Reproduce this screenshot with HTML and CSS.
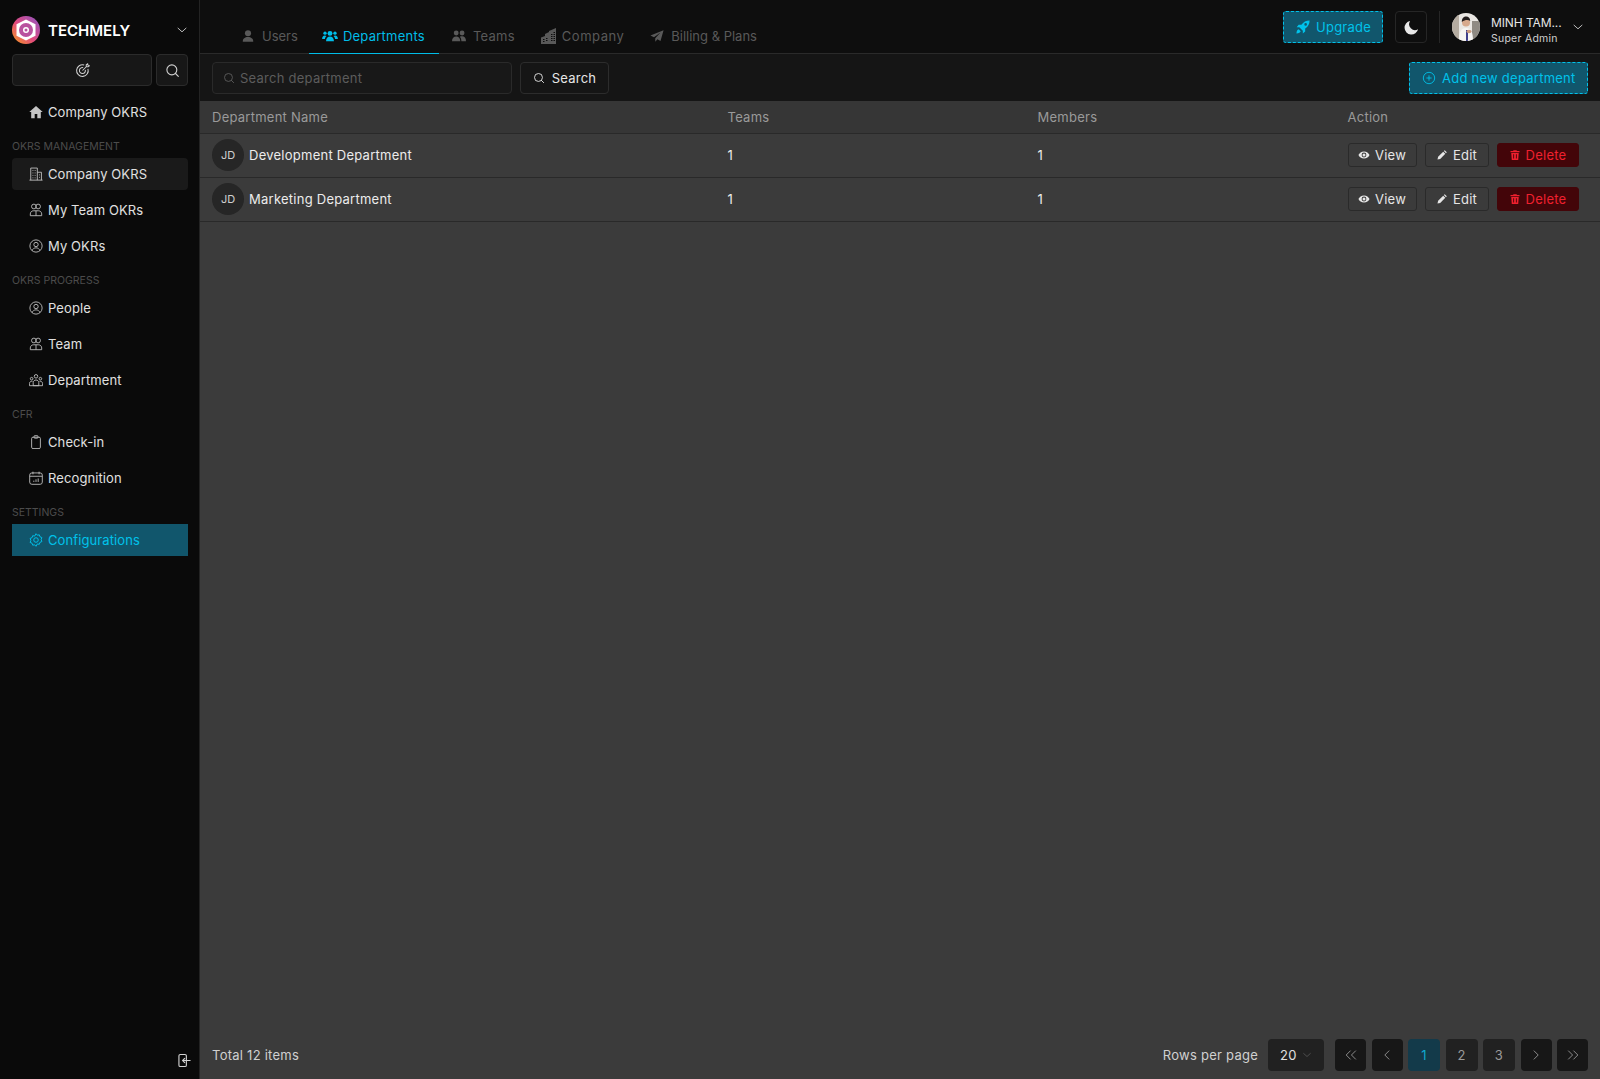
FILE: index.html
```html
<!DOCTYPE html>
<html lang="en">
<head>
<meta charset="utf-8">
<title>Departments</title>
<link rel="stylesheet" href="styles.css">
</head>
<body>
<svg class="defs" width="0" height="0" aria-hidden="true">
  <defs>
    <symbol id="i-search" viewBox="0 0 16 16"><circle cx="7.3" cy="7.3" r="5.3" fill="none" stroke="currentColor" stroke-width="1.2"/><path d="M11.2 11.2l3 3" fill="none" stroke="currentColor" stroke-width="1.2" stroke-linecap="round"/></symbol>
    <symbol id="i-chev" viewBox="0 0 12 12"><path d="M2 4.200l4 3.600 4-3.600" fill="none" stroke="currentColor" stroke-width="1" stroke-linecap="round" stroke-linejoin="round"/></symbol>
    <symbol id="i-team" viewBox="0 0 16 16"><g fill="none" stroke="currentColor" stroke-width="1"><circle cx="5.600" cy="4" r="2.700"/><circle cx="10.400" cy="4" r="2.700"/><path d="M1.500 14.500v-2c0-2 1.600-3.600 3.600-3.600h5.800c2 0 3.600 1.600 3.600 3.600v2z"/><path d="M8 9v5.500"/></g></symbol>
    <symbol id="i-user" viewBox="0 0 16 16"><g fill="none" stroke="currentColor" stroke-width="1"><circle cx="8" cy="8" r="7"/><circle cx="8" cy="6.300" r="2.500"/><path d="M3.600 13.300c.6-2.100 2.300-3.200 4.400-3.200s3.800 1.100 4.400 3.200"/></g></symbol>
    <symbol id="i-solid-user" viewBox="0 0 16 16"><circle cx="8" cy="4.800" r="3.500" fill="currentColor"/><path d="M2 14.500c0-3.500 2.500-5.300 6-5.300s6 1.800 6 5.300z" fill="currentColor"/></symbol>
    <symbol id="i-pages-l" viewBox="0 0 16 16"><path d="M7.500 3l-5 5 5 5M13.500 3l-5 5 5 5" fill="none" stroke="currentColor" stroke-width="1"/></symbol>
    <symbol id="i-pages-r" viewBox="0 0 16 16"><path d="M2.500 3l5 5-5 5M8.500 3l5 5-5 5" fill="none" stroke="currentColor" stroke-width="1"/></symbol>
    <symbol id="i-page-l" viewBox="0 0 16 16"><path d="M10.500 3l-5 5 5 5" fill="none" stroke="currentColor" stroke-width="1"/></symbol>
    <symbol id="i-page-r" viewBox="0 0 16 16"><path d="M5.500 3l5 5-5 5" fill="none" stroke="currentColor" stroke-width="1"/></symbol>
    <symbol id="i-eye" viewBox="0 0 16 16"><path d="M8 3.200C4.500 3.200 1.800 5.400.6 8c1.200 2.600 3.900 4.800 7.400 4.800s6.200-2.200 7.400-4.800C14.200 5.400 11.500 3.200 8 3.200zm0 8A3.200 3.200 0 1 1 8 4.800a3.200 3.200 0 0 1 0 6.400zM8 6a2 2 0 1 0 0 4 2 2 0 0 0 0-4z" fill="currentColor"/></symbol>
    <symbol id="i-pen" viewBox="0 0 16 16"><path d="M2 14l.8-3.600 6.800-6.800 2.800 2.800-6.800 6.800zM10.500 2.700l1.100-1.100 2.800 2.800-1.100 1.100z" fill="currentColor"/></symbol>
    <symbol id="i-trash" viewBox="0 0 16 16"><path d="M6 1.500h4l.6 1.200H14v1.600H2V2.700h3.400zM3 5.300h10l-.7 9.200H3.700zm2.600 1.700v5.800h1.200V7zm3.600 0v5.800h1.200V7z" fill="currentColor" fill-rule="evenodd"/></symbol>
  </defs>
</svg>

<aside class="sidebar">
  <div class="brand">
    <svg class="logo" viewBox="0 0 28 28">
      <defs><linearGradient id="lg" x1="0" y1="1" x2="1" y2="0"><stop offset="0" stop-color="#f9a11b"/><stop offset=".45" stop-color="#e2497e"/><stop offset="1" stop-color="#8b56c6"/></linearGradient></defs>
      <circle cx="14" cy="14" r="14" fill="url(#lg)"/>
      <path d="M14 3.500l9.500 4.800v11.400L14 24.500l-9.500-4.800V8.300z" fill="#fff"/>
      <circle cx="14" cy="14" r="7" fill="#b9529f"/>
      <circle cx="14" cy="14" r="3" fill="#fff"/>
      <circle cx="14" cy="14" r="1.500" fill="#b9529f"/>
    </svg>
    <span class="brand-name">TECHMELY</span>
    <svg class="brand-chev"><use href="#i-chev"/></svg>
  </div>
  <div class="side-tools">
    <button class="tool tool-wide" type="button">
      <svg class="tool-icon" viewBox="0 0 16 16"><g fill="none" stroke="currentColor" stroke-width="1.100"><path d="M13.800 6.200a6.200 6.200 0 1 1-4-4"/><path d="M11 7.300a3.200 3.200 0 1 1-2.300-2.300"/><path d="M8 8l4-4M12 4V2l1.500-1 .4 1.600 1.600.4-1.500 1z"/></g></svg>
    </button>
    <button class="tool tool-square" type="button"><svg class="tool-icon"><use href="#i-search"/></svg></button>
  </div>
  <nav class="side-nav">
    <a class="nav-item">
      <svg class="nav-icon" viewBox="0 0 16 16"><path d="M8 1L.3 8h2.200v7h4v-4.800h3V15h4V8h2.200z" fill="currentColor"/></svg>
      <span>Company OKRS</span>
    </a>
    <div class="nav-label">OKRS MANAGEMENT</div>
    <a class="nav-item is-current">
      <svg class="nav-icon" viewBox="0 0 16 16"><g fill="none" stroke="currentColor" stroke-width="1"><path d="M2 15V1.200h7.500V15M9.500 6h4.700v9M.5 15h15"/><path d="M4 4h1M6.500 4h1M4 6.800h1M6.500 6.800h1M4 9.600h1M6.500 9.600h1M4 12.400h1M6.500 12.400h1M11.500 9h1M11.500 11.800h1"/></g></svg>
      <span>Company OKRS</span>
    </a>
    <a class="nav-item"><svg class="nav-icon"><use href="#i-team"/></svg><span>My Team OKRs</span></a>
    <a class="nav-item"><svg class="nav-icon"><use href="#i-user"/></svg><span>My OKRs</span></a>
    <div class="nav-label">OKRS PROGRESS</div>
    <a class="nav-item"><svg class="nav-icon"><use href="#i-user"/></svg><span>People</span></a>
    <a class="nav-item"><svg class="nav-icon"><use href="#i-team"/></svg><span>Team</span></a>
    <a class="nav-item">
      <svg class="nav-icon" viewBox="0 0 16 16"><g fill="none" stroke="currentColor" stroke-width="1"><circle cx="8" cy="3.800" r="2"/><circle cx="3" cy="6.500" r="1.500"/><circle cx="13" cy="6.500" r="1.500"/><path d="M4.800 14.500v-3.500c0-1.500 1.300-3 3.200-3s3.200 1.500 3.200 3v3.500z"/><path d="M.5 14.500v-2.500c0-1.500 1.200-2.500 2.500-2.500h1M15.500 14.500v-2.500c0-1.500-1.200-2.500-2.500-2.500h-1M.5 14.500h15"/></g></svg>
      <span>Department</span>
    </a>
    <div class="nav-label">CFR</div>
    <a class="nav-item">
      <svg class="nav-icon" viewBox="0 0 16 16"><g fill="none" stroke="currentColor" stroke-width="1"><rect x="3" y="2.500" width="10" height="13" rx="1.500"/><rect x="5.800" y=".8" width="4.400" height="2.800" rx=".6"/></g></svg>
      <span>Check-in</span>
    </a>
    <a class="nav-item">
      <svg class="nav-icon" viewBox="0 0 16 16"><g fill="none" stroke="currentColor" stroke-width="1"><rect x=".8" y="2.200" width="14.400" height="13" rx="2.500"/><path d="M.8 6h14.400M4.500 .8v3M11.500 .8v3M5.500 12.500V11M8 12.500V9.500M10.500 12.500V8.500"/></g></svg>
      <span>Recognition</span>
    </a>
    <div class="nav-label">SETTINGS</div>
    <a class="nav-item is-active">
      <svg class="nav-icon" viewBox="0 0 16 16"><g fill="none" stroke="currentColor" stroke-width="1.100"><path d="M8 .8l1.500 1.700 2.300-.4.700 2.200 2.200.9-.8 2.300.8 2.300-2.200.9-.7 2.200-2.300-.4L8 15.200l-1.500-1.700-2.300.4-.7-2.200-2.200-.9.800-2.300-.8-2.300 2.200-.9.700-2.200 2.300.4z"/><circle cx="8" cy="8" r="2.600"/></g></svg>
      <span>Configurations</span>
    </a>
  </nav>
  <div class="side-foot">
    <svg class="logout" viewBox="0 0 14 16"><g fill="none" stroke="currentColor" stroke-width="1.200"><rect x="1" y="1.500" width="8" height="13" rx="1.500"/><path d="M13.500 8H5M7.500 5.500L5 8l2.500 2.500" stroke-width="1.300"/></g></svg>
  </div>
</aside>

<main class="main">
  <header class="topbar">
    <div class="tabs">
      <a class="tab tab-users"><svg class="tab-icon"><use href="#i-solid-user"/></svg>Users</a>
      <a class="tab tab-on">
        <svg class="tab-icon tab-icon-w" viewBox="0 0 18 16"><g fill="currentColor"><circle cx="9" cy="5" r="2.800"/><circle cx="3.300" cy="4.800" r="1.900"/><circle cx="14.700" cy="4.800" r="1.900"/><path d="M4.500 14c0-3.300 1.800-5.300 4.500-5.300s4.500 2 4.500 5.300zM0 11.500c0-2.300 1.200-4 3.200-4 .8 0 1.300.2 1.800.6C3.800 9 3.300 10.300 3.200 11.500zM18 11.500c0-2.300-1.200-4-3.200-4-.8 0-1.300.2-1.800.6 1.200.9 1.700 2.200 1.800 3.400z"/></g></svg>
        Departments
      </a>
      <a class="tab">
        <svg class="tab-icon" viewBox="0 0 16 16"><g fill="currentColor"><circle cx="4.800" cy="4.500" r="2.800"/><circle cx="11.500" cy="4.500" r="2.800"/><path d="M0 14c0-3.500 2-5.500 4.800-5.500S9.500 10.500 9.500 14zM10.700 14c0-2.200-.5-4-1.700-5.200.7-.3 1.500-.4 2.500-.4 2.800 0 4.500 2 4.500 5.600z"/></g></svg>
        Teams
      </a>
      <a class="tab tab-company">
        <svg class="tab-icon tab-icon-tall" viewBox="0 0 16 16"><path d="M0 16V9.500l4-1.500V6l4-2V3l7-3v16zM2 11v1h1.500v-1zm0 2v1h1.500v-1zm3-3v1h1.500v-1zm0 2v1h1.500v-1zm5-6v1h1.500V6zm0 2v1h1.500V8zm0 2v1h1.500v-1zm0 2v1h1.500v-1zm2.500-8v1H14V4zm0 2v1H14V6zm0 2v1H14V8zm0 2v1H14v-1zm0 2v1H14v-1z" fill="currentColor" fill-rule="evenodd"/></svg>
        Company
      </a>
      <a class="tab tab-billing">
        <svg class="tab-icon" viewBox="0 0 16 16"><path d="M15.500 1.500L.5 7.500l4 2 7.500-5.500-6 6.500v4l2.500-2.700 3.500 2z" fill="currentColor"/></svg>
        Billing &amp; Plans
      </a>
    </div>
    <div class="top-right">
      <button class="dash-btn upgrade" type="button">
        <svg class="btn-icon-lg" viewBox="0 0 16 16"><path d="M15.500.5c-4 0-7 1.500-9.300 5H3L.8 8.300h3l4 4v3L10.500 13V9.700c3.500-2.300 5-5.300 5-9.200zM11 3.500a1.500 1.500 0 1 1 0 3 1.500 1.500 0 0 1 0-3zM3 10.500c-1.500.5-2.300 2-2.500 4.900 3-.2 4.400-1 4.900-2.500z" fill="currentColor" fill-rule="evenodd"/></svg>
        Upgrade
      </button>
      <button class="moon" type="button"><svg viewBox="0 0 16 16" class="moon-icon"><path d="M6.500 1a7.300 7.300 0 1 0 8.500 8.800A6.300 6.300 0 0 1 6.500 1z" fill="currentColor"/></svg></button>
      <div class="top-divider"></div>
      <div class="profile">
        <svg class="photo" viewBox="0 0 28 28">
          <defs><clipPath id="pc"><circle cx="14" cy="14" r="14"/></clipPath></defs>
          <g clip-path="url(#pc)">
            <rect width="28" height="28" fill="#e9e6e2"/>
            <rect x="0" y="0" width="7" height="28" fill="#b5aca1"/>
            <rect x="20" y="8" width="8" height="20" fill="#8f8a83"/>
            <path d="M7 28c0-9 2-13 7-13s7 4 7 13z" fill="#f7f5f3"/>
            <rect x="14" y="17" width="2" height="11" fill="#3f3f8a"/>
            <circle cx="14" cy="9.500" r="4" fill="#d7a98c"/>
            <path d="M9.800 9c0-4 2-5.500 4.400-5.500s4 1.500 4 4.500c-2-1.300-5-1.300-8.400 1z" fill="#221c1b"/>
            <ellipse cx="17" cy="18.500" rx="2.500" ry="1.700" fill="#c99a7e"/>
          </g>
        </svg>
        <div class="who">
          <div class="who-name">MINH TAM...</div>
          <div class="who-role">Super Admin</div>
        </div>
        <svg class="who-chev"><use href="#i-chev"/></svg>
      </div>
    </div>
  </header>

  <div class="toolbar">
    <label class="search-field">
      <svg class="search-icon"><use href="#i-search"/></svg>
      <span class="placeholder">Search department</span>
    </label>
    <button class="search-btn" type="button"><svg class="search-icon"><use href="#i-search"/></svg>Search</button>
    <button class="dash-btn add" type="button">
      <svg class="btn-icon-lg" viewBox="0 0 16 16"><g fill="none" stroke="currentColor" stroke-width="1"><circle cx="8" cy="8" r="6.500"/><path d="M8 5v6M5 8h6"/></g></svg>
      Add new department
    </button>
  </div>

  <table class="grid">
    <colgroup><col class="c1"><col class="c2"><col class="c3"><col class="c4"></colgroup>
    <thead>
      <tr><th>Department Name</th><th>Teams</th><th>Members</th><th>Action</th></tr>
    </thead>
    <tbody>
      <tr>
        <td><div class="dept"><span class="badge">JD</span>Development Department</div></td>
        <td>1</td><td>1</td>
        <td><div class="actions">
          <button class="act act-view" type="button"><svg class="act-icon"><use href="#i-eye"/></svg>View</button>
          <button class="act act-edit" type="button"><svg class="act-icon"><use href="#i-pen"/></svg>Edit</button>
          <button class="act act-del" type="button"><svg class="act-icon"><use href="#i-trash"/></svg>Delete</button>
        </div></td>
      </tr>
      <tr>
        <td><div class="dept"><span class="badge">JD</span>Marketing Department</div></td>
        <td>1</td><td>1</td>
        <td><div class="actions">
          <button class="act act-view" type="button"><svg class="act-icon"><use href="#i-eye"/></svg>View</button>
          <button class="act act-edit" type="button"><svg class="act-icon"><use href="#i-pen"/></svg>Edit</button>
          <button class="act act-del" type="button"><svg class="act-icon"><use href="#i-trash"/></svg>Delete</button>
        </div></td>
      </tr>
    </tbody>
  </table>

  <footer class="foot">
    <span class="total">Total 12 items</span>
    <div class="pager">
      <span class="rows-label">Rows per page</span>
      <div class="rows-select"><span>20</span><svg class="rows-chev"><use href="#i-chev"/></svg></div>
      <div class="pages">
        <button class="pg pg-arrow" type="button"><svg class="pg-icon"><use href="#i-pages-l"/></svg></button>
        <button class="pg pg-arrow" type="button"><svg class="pg-icon"><use href="#i-page-l"/></svg></button>
        <button class="pg pg-num pg-on" type="button">1</button>
        <button class="pg pg-num" type="button">2</button>
        <button class="pg pg-num" type="button">3</button>
        <button class="pg pg-arrow" type="button"><svg class="pg-icon"><use href="#i-page-r"/></svg></button>
        <button class="pg pg-arrow" type="button"><svg class="pg-icon"><use href="#i-pages-r"/></svg></button>
      </div>
    </div>
  </footer>
</main>
</body>
</html>
```
FILE: styles.css
```css
* { box-sizing: border-box; }
html, body { height: 100%; }
body {
  margin: 0;
  display: flex;
  height: 1079px;
  overflow: hidden;
  background: #3b3b3b;
  color: #e6e6e6;
  font-family: Inter, "Open Sans", "Liberation Sans", sans-serif;
  font-size: 13px;
  letter-spacing: .25px;
}
button { font: inherit; letter-spacing: inherit; cursor: pointer; }
.defs { display: block; position: absolute; }

/* Sidebar */
.sidebar {
  width: 200px;
  flex: none;
  display: flex;
  flex-direction: column;
  background: #0a0a0a;
  border-right: 1px solid #232323;
  padding: 16px 11px 0 12px;
}
.brand { display: flex; align-items: center; height: 28px; }
.logo { width: 28px; height: 28px; flex: none; }
.brand-name { margin-left: 8px; font-size: 15px; font-weight: 600; color: #fff; letter-spacing: 0; }
.brand-chev { width: 12px; height: 12px; margin-left: auto; color: #bbb; }
.side-tools { display: flex; gap: 4px; margin-top: 10px; }
.tool {
  height: 32px;
  display: flex;
  align-items: center;
  justify-content: center;
  background: #171717;
  border: 1px solid #2b2b2b;
  border-radius: 4px;
  color: #cfcfcf;
  padding: 0;
}
.tool-wide { width: 140px; }
.tool-square { width: 32px; }
.tool-icon { width: 15px; height: 15px; }
.side-nav { display: flex; flex-direction: column; gap: 4px; margin-top: 10px; }
.nav-item {
  height: 32px;
  display: flex;
  align-items: center;
  gap: 5px;
  padding-left: 17px;
  border-radius: 4px;
  color: #e0e0e0;
  letter-spacing: .1px;
}
.nav-icon { width: 14px; height: 14px; flex: none; color: #c4c4c4; }
.nav-item.is-current { background: #1a1a1a; }
.nav-item.is-active { background: #11566c; color: #00c2ea; border-radius: 0; }
.nav-item.is-active .nav-icon { color: #00c2ea; }
.nav-label {
  height: 14px;
  margin: 8px 0 0;
  font-size: 10.500px;
  line-height: 14px;
  letter-spacing: 0;
  color: #4c4c4c;
}
.side-foot { margin-top: auto; height: 26px; display: flex; justify-content: flex-end; }
.logout { width: 13px; height: 15px; color: #d4d4d4; margin-right: -3px; }

/* Main */
.main { flex: 1; min-width: 0; display: flex; flex-direction: column; }
.topbar {
  height: 54px;
  flex: none;
  display: flex;
  align-items: stretch;
  justify-content: space-between;
  background: #0e0e0e;
  border-bottom: 1px solid #2a2a2a;
  padding: 0 16px 0 28px;
}
.tabs { display: flex; align-items: flex-end; margin-bottom: -1px; }
.tab {
  height: 36px;
  display: flex;
  align-items: center;
  gap: 7px;
  padding: 0 13px;
  color: #595959;
  border-bottom: 1px solid transparent;
}
.tab-users { padding-right: 11px; letter-spacing: 0; }
.tab-on { color: #00bde8; border-bottom-color: #00bde8; gap: 5px; padding-right: 14px; }
.tab-company { gap: 5px; letter-spacing: .5px; }
.tab-billing { letter-spacing: 0; }
.tab-icon { width: 14px; height: 14px; flex: none; }
.tab-icon-w { width: 16px; }
.tab-icon-tall { width: 16px; height: 16px; }
.top-right { display: flex; align-items: center; padding-top: 1px; }
.dash-btn {
  height: 32px;
  display: flex;
  align-items: center;
  background: #11566c;
  color: #00c2ea;
  border: 1px dashed #00c2ea;
  border-radius: 3px;
  gap: 6px;
}
.upgrade { width: 100px; padding: 0 0 0 12px; }
.btn-icon-lg { width: 14px; height: 14px; flex: none; }
.moon {
  width: 32px;
  height: 32px;
  margin-left: 12px;
  padding: 0;
  display: flex;
  align-items: center;
  justify-content: center;
  background: transparent;
  border: 1px solid #262626;
  border-radius: 4px;
  color: #e8e8e8;
}
.moon-icon { width: 15px; height: 15px; }
.top-divider { width: 1px; height: 32px; margin: 0 12px; background: #262626; }
.profile { display: flex; align-items: center; }
.photo { width: 28px; height: 28px; flex: none; }
.who { width: 81px; margin-left: 11px; padding-top: 6px; }
.who-name { font-size: 12px; line-height: 17px; letter-spacing: -.1px; color: #e6e6e6; white-space: nowrap; }
.who-role { font-size: 10.500px; line-height: 15px; color: #cfcfcf; }
.who-chev { width: 12px; height: 12px; color: #bbb; }

.toolbar {
  height: 47px;
  flex: none;
  display: flex;
  align-items: center;
  gap: 8px;
  background: #151515;
  padding: 0 12px;
}
.search-field {
  width: 300px;
  height: 32px;
  display: flex;
  align-items: center;
  gap: 5px;
  padding: 0 10px;
  border: 1px solid #2a2a2a;
  border-radius: 4px;
  background: #181818;
}
.search-icon { width: 12px; height: 12px; flex: none; }
.search-field .search-icon { color: #5c5c5c; }
.placeholder { color: #5c5c5c; }
.search-btn {
  width: 89px;
  height: 32px;
  display: flex;
  align-items: center;
  justify-content: center;
  gap: 7px;
  padding: 0;
  background: transparent;
  border: 1px solid #2c2c2c;
  border-radius: 4px;
  color: #e6e6e6;
}
.add { width: 179px; margin-left: auto; padding: 0 0 0 12px; }

/* Table */
.grid { width: 100%; table-layout: fixed; border-collapse: collapse; }
.c1 { width: 515.500px; }
.c2 { width: 310px; }
.c3 { width: 310px; }
.grid th {
  height: 32px;
  padding: 0 12px;
  text-align: left;
  font-weight: 400;
  color: #9a9a9a;
  background: #363636;
  border-bottom: 1px solid #292929;
}
.grid td {
  height: 44px;
  padding: 0 12px;
  color: #ececec;
  border-bottom: 1px solid #292929;
}
.dept { display: flex; align-items: center; gap: 5px; }
.badge {
  width: 32px;
  height: 32px;
  display: flex;
  align-items: center;
  justify-content: center;
  border-radius: 50%;
  background: #262626;
  font-size: 11px;
  color: #cfcfcf;
  letter-spacing: 0;
}
.actions { display: flex; gap: 8px; }
.act {
  height: 24px;
  display: flex;
  align-items: center;
  justify-content: center;
  gap: 5px;
  padding: 0;
  background: transparent;
  border: 1px solid #2a2a2a;
  border-radius: 3px;
  color: #e6e6e6;
}
.act-view { width: 69px; }
.act-edit { width: 64px; }
.act-del { width: 82px; background: #430509; border-color: #430509; color: #f0202e; }
.act-icon { width: 12px; height: 12px; flex: none; }

/* Footer */
.foot {
  margin-top: auto;
  height: 40px;
  flex: none;
  display: flex;
  align-items: flex-start;
  justify-content: space-between;
  padding: 0 12px;
}
.total { line-height: 32px; color: #d0d0d0; }
.pager { display: flex; align-items: center; }
.rows-label { color: #d0d0d0; }
.rows-select {
  width: 56px;
  height: 32px;
  margin-left: 10px;
  display: flex;
  align-items: center;
  justify-content: space-between;
  padding: 0 12px;
  background: #212121;
  border-radius: 4px;
  color: #e0e0e0;
}
.rows-chev { width: 10px; height: 10px; color: #555; }
.pages { display: flex; gap: 5.500px; margin-left: 11px; }
.pg {
  height: 32px;
  padding: 0;
  display: flex;
  align-items: center;
  justify-content: center;
  border: 0;
  border-radius: 4px;
}
.pg-arrow { width: 31px; background: #171717; color: #9a9a9a; }
.pg-num { width: 32px; background: #212121; color: #9a9a9a; }
.pg-on { background: #133a4a; color: #0fa8cf; }
.pg-icon { width: 14px; height: 14px; }
```
